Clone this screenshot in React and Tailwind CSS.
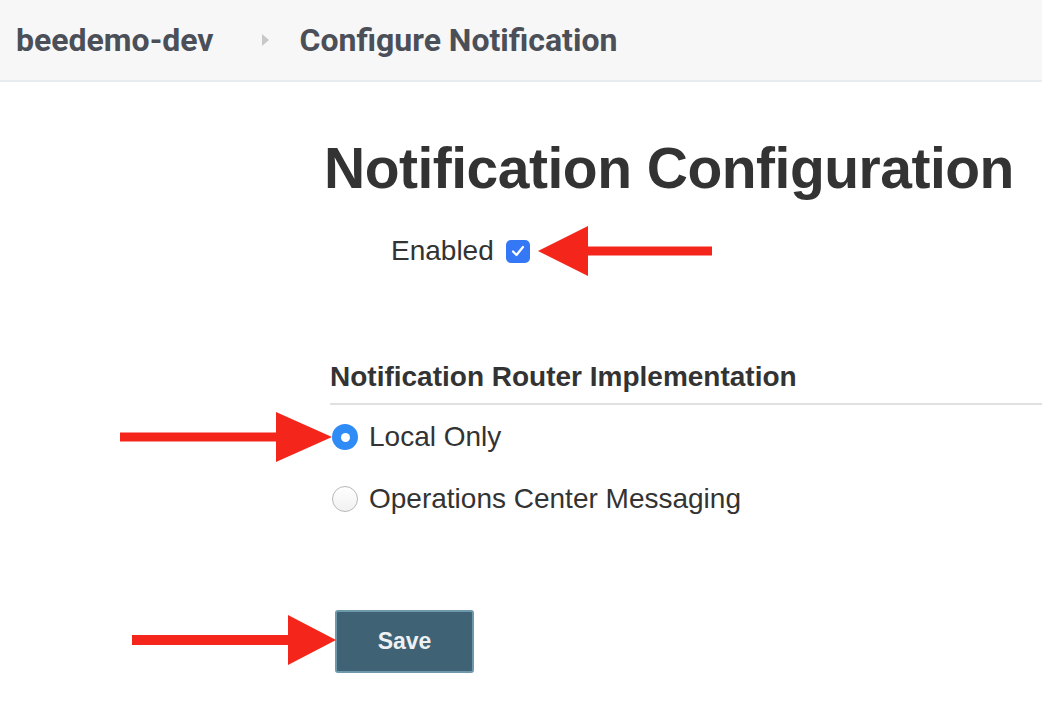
import React from 'react';

function Arrow({ x1, x2, y, dir, headLen, headHalf, thick }) {
  // dir 'left': tip at x1; dir 'right': tip at x2
  const w = x2 - x1;
  const h = headHalf * 2;
  const c = headHalf;
  const t = thick / 2;
  const pts =
    dir === 'left'
      ? `0,${c} ${headLen},0 ${headLen},${c - t} ${w},${c - t} ${w},${c + t} ${headLen},${c + t} ${headLen},${h}`
      : `${w},${c} ${w - headLen},0 ${w - headLen},${c - t} 0,${c - t} 0,${c + t} ${w - headLen},${c + t} ${w - headLen},${h}`;
  return (
    <svg
      className="absolute pointer-events-none"
      style={{ left: x1, top: y - c }}
      width={w}
      height={h}
      viewBox={`0 0 ${w} ${h}`}
    >
      <polygon points={pts} fill="#f4261b" />
    </svg>
  );
}

function Radio({ checked, label }) {
  return (
    <label className="flex items-center h-[30px]">
      {checked ? (
        <span className="w-[26px] h-[26px] rounded-full bg-[#2f8bf5] flex items-center justify-center">
          <span className="w-[9px] h-[9px] rounded-full bg-white" />
        </span>
      ) : (
        <span className="w-[26px] h-[26px] rounded-full border border-[#b8b8b8] bg-gradient-to-b from-white to-[#f1f1f1]" />
      )}
      <span className="ml-[11px] text-[28px] leading-[30px] text-[#333]">{label}</span>
    </label>
  );
}

export default function App() {
  return (
    <div className="relative w-[1042px] h-[704px] overflow-hidden bg-white font-['Liberation_Sans',Arial,sans-serif]">
      <header className="h-[82px] bg-[#f7f7f7] border-b-2 border-[#e8ecef] flex items-center pl-[16px] font-['Roboto',sans-serif] font-bold text-[32px] text-[#4b4f58]">
        <span>beedemo-dev</span>
        <svg className="ml-[48px]" width="8" height="12" viewBox="0 0 8 12">
          <polygon points="0,0 7,6 0,12" fill="#c8c8c8" />
        </svg>
        <span className="ml-[30px]">Configure Notification</span>
      </header>

      <main className="flex flex-col">
        <h1 className="ml-[324px] mt-[58px] h-[57px] text-[57px] leading-none font-bold tracking-[-0.5px] text-[#333] whitespace-nowrap">
          Notification Configuration
        </h1>

        <div className="ml-[391px] mt-[39px] h-[30px] flex items-center">
          <span className="text-[28px] leading-[30px] text-[#333]">Enabled</span>
          <span className="ml-[12px] w-[24px] h-[23px] rounded-[5px] bg-[#3478f6] flex items-center justify-center">
            <svg width="16" height="14" viewBox="0 0 16 14">
              <path d="M3 7.5 L6.5 11 L13 3" stroke="white" strokeWidth="2.2" fill="none" strokeLinecap="round" strokeLinejoin="round" />
            </svg>
          </span>
        </div>

        <div className="ml-[330px] mt-[96px] flex flex-col">
          <h2 className="h-[30px] text-[28px] leading-[30px] font-bold text-[#333] whitespace-nowrap">
            Notification Router Implementation
          </h2>
          <div className="mt-[11px] h-[2px] bg-[#e0e0e0]" />
          <div className="mt-[17px] ml-[2px] flex flex-col gap-[32px]">
            <Radio checked label="Local Only" />
            <Radio label="Operations Center Messaging" />
          </div>
        </div>

        <div className="ml-[335px] mt-[96px]">
          <button className="w-[139px] h-[63px] bg-[#3f6275] border-2 border-[#6e98ab] rounded-[3px] text-[23px] font-bold text-[#eef1f3]">
            Save
          </button>
        </div>
      </main>

      <Arrow x1={538} x2={712} y={251} dir="left" headLen={50} headHalf={25} thick={9} />
      <Arrow x1={120} x2={332} y={437} dir="right" headLen={56} headHalf={25} thick={9} />
      <Arrow x1={132} x2={336} y={640} dir="right" headLen={48} headHalf={25} thick={10} />
    </div>
  );
}
